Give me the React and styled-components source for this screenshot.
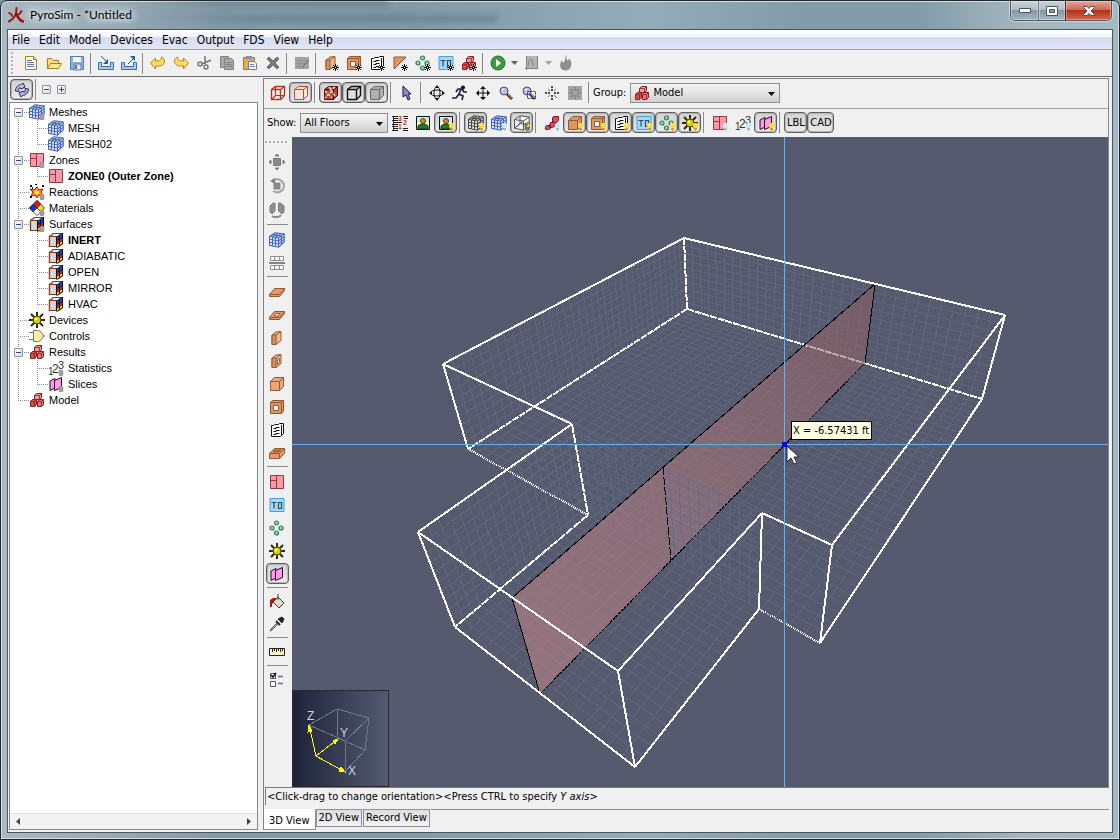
import React from "react";
import styled, { createGlobalStyle, css } from "styled-components";

const GlobalStyle = createGlobalStyle`
  * {
    box-sizing: border-box;
  }
  body {
    margin: 0;
    background: #7f97a3;
  }
  button, select {
    margin: 0;
    font: inherit;
    color: inherit;
  }
`;

/* ---------- icons ---------- */

const Bulb = () => (
  <g>
    <path d="M12 8h3l1 1v3l-1 1h-3l-1-1V9z" fill="#ffd83a" />
    <path d="M12 9h1v2h-1z" fill="#fff6b0" />
    <path d="M12 13h3v2h-1v1h-1v-1h-1z" fill="#e0a010" />
  </g>
);

const PaleBulb = () => (
  <g>
    <path d="M12 8h3l1 1v3l-1 1h-3l-1-1V9z" fill="#cfe6f4" />
    <path d="M12 13h3v2h-1v1h-1v-1h-1z" fill="#9fc0d8" />
  </g>
);

const Spark = () => (
  <g>
    <circle cx="12.5" cy="12.5" r="3" fill="#fff" fillOpacity=".7" />
    <path d="M9 12.500h7M12.500 9v7M10 10l5 5M15 10l-5 5" stroke="#111" strokeWidth="1" fill="none" />
    <path d="M12 12h1v1h-1z" fill="#fff" />
  </g>
);

const Tag = () => <path d="M12 10h2l1 1v4l-1 1h-2l-1-1v-4z" fill="#a2a2a2" stroke="#808080" strokeWidth=".5" />;

const MeshShape = ({ color = "#3f62c0", fill = "#f3f6ff" }) => (
  <g stroke={color} strokeWidth="1.100">
    <path d="M.5 4.500L6 .8l9.200 1.200v8L9.500 15.200.500 13.200z" fill={fill} />
    <path d="M.5 4.500l9 1.500 5.700-4M9.500 6v9M3.500 5v8.700M6.500 5.500v8.800M12.400 4v8.600" fill="none" />
    <path d="M.5 7.300L9.500 9l5.700-4.300M.5 10.200l9 1.800 5.700-4.600M3.500 5L9 1.200M6.500 5.500L12 1.600M3.300 2.600L12.400 4" fill="none" />
  </g>
);

const WireCube = ({ color, fill = "none", width = 1 }) => (
  <g stroke={color} fill={fill} strokeWidth={width}>
    <path d="M1.500 4.500l4-3h9v9l-4 4h-9z" />
    <path d="M1.500 4.500h9v10M10.500 4.500l4-3" fill="none" />
  </g>
);

const Block = () => (
  <g stroke="#96582e" strokeWidth="1">
    <path d="M3 5l4-3 5-.5v9l-5 4H3z" fill="#f0b88e" />
    <path d="M3 5h4v9.500H3z" fill="#d98f5e" />
    <path d="M7 5l5-3.500" fill="none" />
  </g>
);

const HoleFrame = () => (
  <g stroke="#96582e" strokeWidth="1">
    <path d="M1.500 3.500l2-2h11v11l-2 2h-11z" fill="#dc9668" />
    <path d="M1.500 3.500h11v11M12.500 3.500l2-2" fill="none" />
    <path d="M4.500 6.500h5v5h-5z" fill="#fff" />
  </g>
);

const VentPage = () => (
  <g>
    <path d="M2.500 3.500l2-1h4l2-1h4v11l-3 2h-9z" fill="#fff" />
    <path d="M2.500 14.500v-11h2l1-1h4l1-1h4v10l-3 3zM12.500 3v10" fill="none" stroke="#111" />
    <path d="M4.500 6.500h2l1-1h3M4.500 9.500h2l1-1h3M4.500 12.500h2l1-1h3" fill="none" stroke="#111" strokeWidth="1.200" />
  </g>
);

const Diamonds = () => (
  <g fill="#9fd8b4" stroke="#2f7d55" strokeWidth="1.200">
    <circle cx="7.500" cy="3" r="2" />
    <circle cx="3" cy="8" r="2" />
    <circle cx="12" cy="8" r="2" />
    <circle cx="7.500" cy="13" r="2" />
  </g>
);

const Thermo = () => (
  <g>
    <path d="M1 1.500h14v13H1z" fill="#a6d8f0" stroke="#3fa4dc" />
    <path d="M2.500 5.500h5M5 5.500v6M9.500 5.500h3v6h-3z" fill="none" stroke="#2f4a66" strokeWidth="1.200" />
  </g>
);

const RedCubes = () => (
  <g stroke="#8a1f1f" strokeWidth="1">
    <path d="M5.500 3.500l2-2h5v4l-2 2h-5z" fill="#f09a9a" />
    <path d="M1.500 9.500l2-2h4v5l-2 2h-4z" fill="#d84c4c" />
    <path d="M8.500 9.500l2-2h4v5l-2 2h-4z" fill="#e47474" />
    <path d="M1.500 9.500h4v5M8.500 9.500h4v5M5.500 3.500h5v4M5.500 9.500l2-2M12.500 9.500l2-2M10.500 3.500l2-2" fill="none" strokeWidth=".8" />
  </g>
);

const SunGear = () => (
  <g>
    <path d="M8 0v16M0 8h16M2 2l12 12M14 2L2 14" stroke="#2d2d00" strokeWidth="2" fill="none" />
    <circle cx="8" cy="8" r="4" fill="#d2ce00" stroke="#4a4a00" />
    <circle cx="7" cy="7" r="1.500" fill="#ffff7a" />
  </g>
);

const ZoneShape = () => (
  <g fill="#ff98a4" stroke="#8a3c48" strokeWidth="1">
    <path d="M1.500 1.500h13v13h-13z" />
    <path d="M7.500 1.500v13M1.500 6.500h6" />
  </g>
);

const SliceShape = () => (
  <g fill="#ff9ae6" stroke="#2a0a24" strokeWidth="1">
    <path d="M2 5l5-2.500v9.500l-5 2.500z" />
    <path d="M6.500 4.500l7-3v10l-7 3z" />
  </g>
);

const Digits = () => (
  <g fontFamily="Liberation Sans, sans-serif" fill="#333">
    <text x="0" y="15" fontSize="10">1</text>
    <text x="4" y="13" fontSize="12">2</text>
    <text x="10" y="9" fontSize="11">3</text>
  </g>
);

const SurfShape = () => (
  <g>
    <path d="M1.500 4.500l4-3h9v10l-5 3h-8z" fill="#f4f4f4" stroke="#8a3418" strokeWidth="1.200" />
    <path d="M1.500 4.500h7v10h-7z" fill="#d8d8d8" stroke="#8a3418" strokeWidth="1.200" />
    <path d="M8 5l6-4h1v11l-5 3.500H8z" fill="#111" />
    <path d="M9 5l2-1.500v3L9 8zM12 3l2-1v3l-2 1.500z" fill="#1c3fd0" />
    <path d="M9 9l2-1v2l-2 1.500zM12 7l2-1v2.500L12 10z" fill="#e02020" />
    <path d="M9 12.500l2-1.500v2.500L9 15zM12 10.500l2-1v2l-2 1.500z" fill="#ffd800" />
  </g>
);

const Person = () => (
  <g>
    <path d="M1.500 1.500h13v13h-13z" fill="#fff7c0" stroke="#111" />
    <path d="M2 2h12v5H2z" fill="#bdeef4" />
    <path d="M3 14v-3l3-2h4l3 2v3z" fill="#1f7a2c" stroke="#0a3d14" />
    <circle cx="8" cy="6" r="2.500" fill="#d88a2c" stroke="#6b3d0a" />
  </g>
);

const Magnifier = () => (
  <g>
    <path d="M9 9l5 5" stroke="#5a3a20" strokeWidth="3" />
    <path d="M10 9l4 4" stroke="#d89a4c" strokeWidth="1" />
    <circle cx="6" cy="6" r="4" fill="#b9bfe6" stroke="#4a4a66" />
    <path d="M4 5l2-1" stroke="#fff" />
  </g>
);

const Slab = () => (
  <g stroke="#96582e">
    <path d="M.5 10.500l5-6h10v2l-5 6H.5z" fill="#e29a6c" />
    <path d="M.5 10.500h10l5-6" fill="none" />
  </g>
);

const GLYPHS = {
  logo: (
    <g fill="none" stroke="#9b1212" strokeLinecap="round">
      <path d="M8.500 1c0 6-1 10-7.500 13.500" strokeWidth="2" />
      <path d="M8.500 7c1 3 3 6 6.500 7.500" strokeWidth="2.500" />
      <path d="M1 6c2 .5 3 1 3 3M13.500 4c-1 2-2 3-3 3.500" strokeWidth="1.800" />
    </g>
  ),
  file: (
    <g>
      <path d="M2.500 1.500h8l3 3v10h-11z" fill="#fffbe8" stroke="#a8821c" />
      <path d="M10.500 1.500v3h3" fill="#e8d088" stroke="#a8821c" />
      <path d="M4 5.500h5M4 7.500h7M4 9.500h7M4 11.500h7" stroke="#5a78a8" />
    </g>
  ),
  open: (
    <g stroke="#b07a1a">
      <path d="M1.500 13.500v-10h4l2 2h5v3" fill="#f6d98a" />
      <path d="M1.500 13.500l3-5h11l-3 5z" fill="#ffe7a0" />
    </g>
  ),
  save: (
    <g>
      <path d="M1.500 1.500h13v13h-13z" fill="#8fb2d8" stroke="#5a7ba6" />
      <path d="M4 2h8v5H4z" fill="#f2f6fb" />
      <path d="M5 9h7v6H5z" fill="#dfe6ee" stroke="#5a7ba6" />
      <path d="M6 10h2v4H6z" fill="#5a7ba6" />
    </g>
  ),
  importFile: (
    <g>
      <path d="M.5 7.500h3v4h9v-4h3v7H.5z" fill="#a9c6e6" stroke="#3f6fa6" />
      <path d="M3 1l5 5" stroke="#1f4f86" />
      <path d="M10 4v5H5z" fill="#1f5f9a" />
    </g>
  ),
  exportFile: (
    <g>
      <path d="M.5 7.500h3v4h9v-4h3v7H.5z" fill="#a9c6e6" stroke="#3f6fa6" />
      <path d="M7 9l5-5" stroke="#1f4f86" />
      <path d="M14 1v5L9 1z" fill="#1f5f9a" />
    </g>
  ),
  undo: <path d="M.5 8l5-5v3h2c3 0 4-2 4-4 4 1 4 7 0 8.500-1 .5-3 .5-4 .5h-2v3z" fill="#ffdc66" stroke="#b5831a" />,
  redo: <path d="M15.500 8l-5-5v3h-2c-3 0-4-2-4-4-4 1-4 7 0 8.500 1 .5 3 .5 4 .5h2v3z" fill="#ffdc66" stroke="#b5831a" />,
  cut: (
    <g fill="none" stroke="#777" strokeWidth="1.500">
      <path d="M9 1v8M15 5L6 9" />
      <circle cx="4" cy="9" r="2" />
      <circle cx="10" cy="12" r="2" />
    </g>
  ),
  copy: (
    <g fill="#a8a8a8" stroke="#848484">
      <path d="M1.500 1.500h8v11h-8z" />
      <path d="M5.500 3.500h7l2 2v9h-9z" />
      <path d="M7 7.500h6M7 9.500h6M7 11.500h6" />
    </g>
  ),
  paste: (
    <g>
      <path d="M1.500 2.500h11v12h-11z" fill="#e2aa5c" stroke="#a8742c" />
      <path d="M4 1h6v3H4z" fill="#7f93b0" />
      <path d="M6.500 6.500h6l2 2v6h-8z" fill="#f4f7fc" stroke="#6a7fa6" />
      <path d="M8 9.500h4M8 11.500h5" stroke="#6a7fa6" />
    </g>
  ),
  remove: <path d="M2 4l2-2 4 4 4-4 2 2-4 4 4 4-2 2-4-4-4 4-2-2 4-4z" fill="#7b7b7b" stroke="#6a6a6a" />,
  tableEdit: (
    <g>
      <path d="M1 2h14v12H1z" fill="#a4a4a4" />
      <path d="M1 5.500h14M1 8.500h10M1 11.500h8M5.500 5v9" stroke="#929292" />
      <path d="M8 13l6-7" stroke="#868686" strokeWidth="2" />
    </g>
  ),
  newBlock: <g><Block /><Spark /></g>,
  newHole: <g><HoleFrame /><Spark /></g>,
  newVent: <g><VentPage /><Spark /></g>,
  newTri: <g><path d="M2 2h12L2 14z" fill="#dc9668" stroke="#96582e" /><path d="M2 14L14 2" stroke="#7a4422" /><Spark /></g>,
  newDevice: <g><Diamonds /><Spark /></g>,
  newThermo: <g><Thermo /><Spark /></g>,
  newGroup: <g><RedCubes /><Spark /></g>,
  run: (
    <g>
      <circle cx="8" cy="8" r="7" fill="#3f9a3c" stroke="#256b2a" />
      <path d="M6 4l5 4-5 4z" fill="#fff" />
    </g>
  ),
  plot: (
    <g>
      <path d="M2 1h12v12H2z" fill="#b4b4b4" />
      <path d="M2.500 1v14M1 13.500h13" stroke="#808080" />
      <path d="M4 11c2-10 4-9 5 0M13.500 1v13" fill="none" stroke="#808080" />
    </g>
  ),
  flame: <path d="M8 0c1 3 0 4 1 5s2 0 2-2c4 4 3 12-3 12.500C1 15.500 1 9 4 5c0 2 1 3 2 2s1-4 2-7z" fill="#8f8f8f" />,
  sync: (
    <g stroke="#22224a" strokeWidth="1">
      <path d="M1.500 9c0-4 3-6.500 6-6.500L9 1l2 4-4 2-1-1.500C4.500 6 4.500 8 5 9.500z" fill="#c3c3ea" />
      <path d="M14.500 7c0 4-3 6.500-6 6.500L7 15l-2-4 4-2 1 1.500C11.500 10 11.500 8 11 6.500z" fill="#b4b4e2" />
    </g>
  ),
  wireCube: (
    <g>
      <WireCube color="#b0381a" width={1.4} />
      <path d="M1.500 14.500l4-4h9M5.500 10.500v-9" fill="none" stroke="#b0381a" strokeWidth="1.200" />
    </g>
  ),
  lightCube: <WireCube color="#c24a2c" fill="#f6e6e0" />,
  textureCube: (
    <g>
      <WireCube color="#4a1208" fill="#b8442c" />
      <path d="M2 6l7 7M9 6l-7 7M6 2l6 9M12 2l-5 3" stroke="#f4cfc4" strokeWidth="1.500" strokeDasharray="3 1" />
    </g>
  ),
  outlineCube: <WireCube color="#111" fill="#dedede" width={1.4} />,
  greyCube: <WireCube color="#666" fill="#b0b0b0" />,
  cursor: <path d="M4 1v11l3-2 2 5 2-1-2-5h3z" fill="#8c8cd0" stroke="#14143c" />,
  orbit: (
    <g fill="none" stroke="#111">
      <ellipse cx="8" cy="8" rx="6.500" ry="3" />
      <ellipse cx="8" cy="8" rx="3" ry="6.500" />
      <path d="M8 0l2 3H6zM8 16l2-3H6zM0 8l3-2v4zM16 8l-3-2v4z" fill="#111" stroke="none" />
    </g>
  ),
  walk: (
    <g>
      <circle cx="11" cy="2.500" r="2" fill="#111" />
      <path d="M9 4L7 9l4 2-1 4M7 9l-3 4H0M4 7l2-3h4l2 3h3" fill="none" stroke="#22223a" strokeWidth="1.700" />
    </g>
  ),
  pan: (
    <g>
      <path d="M8 2v12M2 8h12" stroke="#111" strokeWidth="1" />
      <path d="M8 1l3 3H5zM8 15l3-3H5zM1 8l3-3v6zM15 8l-3-3v6z" fill="#111" />
    </g>
  ),
  zoom: <Magnifier />,
  zoomBox: <g><Magnifier /><path d="M6.500 6.500h8v7h-8z" fill="none" stroke="#26268a" strokeDasharray="2 1" /></g>,
  center: (
    <g stroke="#111" fill="none">
      <path d="M8 1v5M8 10v5M1 8h5M10 8h5" strokeWidth="1.500" strokeDasharray="2 1" />
      <path d="M4 4l2 2M12 4l-2 2M4 12l2-2" stroke="#4a7aa8" />
      <path d="M10 10l3 3" stroke="#b0541a" />
    </g>
  ),
  resetView: (
    <g>
      <path d="M1 1h14v14H1z" fill="#a4a4a4" />
      <path d="M8 2v4M8 10v4M2 8h4M10 8h4M4 4l2 2M12 4l-2 2M4 12l2-2M12 12l-2-2" stroke="#7c7c7c" strokeWidth="1.200" />
    </g>
  ),
  floors: (
    <g>
      <path d="M0 1.500h6M11 1.500h5M1 3.500h5M0 5.500h6M1 7.500h9M0 9.500h6M0 11.500h6M1 13.500h5M0 15.500h6M11 13.500h5M11 15.500h5M12 3.500h4" stroke="#222" />
      <path d="M1.500 1v14" stroke="#222" />
      <g fontFamily="Liberation Sans, sans-serif" fontSize="7" fontWeight="bold" fill="#d42a1a">
        <text x="6" y="6">3</text>
        <text x="11" y="10">2</text>
        <text x="6" y="14">1</text>
      </g>
    </g>
  ),
  person: <Person />,
  personOn: <g><Person /><Bulb /></g>,
  meshGreyOn: <g><MeshShape color="#444" fill="#f4f4f4" /><Bulb /></g>,
  meshPale: <g><MeshShape /><PaleBulb /></g>,
  meshLineOn: (
    <g stroke="#555" fill="none">
      <path d="M.5 4.500L6 .8l9.200 1.200v8L9.500 15.200.500 13.200z" fill="#f4f4f4" />
      <path d="M.5 4.500l9 1.500 5.700-4M9.500 6v9M.5 13.200L6 8.500l9.200 1.500M6 8.500V1M9.500 6L.5 13.200" />
      <Bulb />
    </g>
  ),
  groupPale: <g><path d="M9.500 1.500h5v4l-2 2h-4v-5zM6.500 7.500h5v3l-3 2h-3v-3zM2.500 10.500h4v3l-2 1h-3v-3z" fill="#d84c5c" stroke="#7d1622" /><PaleBulb /></g>,
  boxOn: <g><path d="M1.500 5.500l4-4h9v9l-4 4h-9z" fill="#dc9668" stroke="#96582e" /><path d="M1.500 5.500h9v9M10.500 5.500l4-4" fill="none" stroke="#96582e" /><Bulb /></g>,
  holeOn: <g><HoleFrame /><Bulb /></g>,
  ventOn: <g><VentPage /><Bulb /></g>,
  thermoOn: <g><Thermo /><Bulb /></g>,
  devicesOn: <g><Diamonds /><Bulb /></g>,
  sunOn: <g><SunGear /><Bulb /></g>,
  zonePale: <g><ZoneShape /><PaleBulb /></g>,
  digitsPale: <g><Digits /><PaleBulb /></g>,
  sliceOn: <g><SliceShape /><Bulb /></g>,
  move: <path d="M4.500 4.500h7v7h-7zM8 0l2 2H6zM8 16l2-2H6zM0 8l2-2v4zM16 8l-2-2v4z" fill="#8a8a8a" stroke="#7a7a7a" />,
  rotate: (
    <g>
      <path d="M4.500 4.500h7v7h-7z" fill="#8a8a8a" />
      <path d="M4 2c6-2 11 1 11 6s-6 8-11 5" fill="none" stroke="#a4a4a4" strokeWidth="2" />
      <path d="M1 3l5-3v6z" fill="#808080" />
    </g>
  ),
  mirror: (
    <g>
      <path d="M1 4l3-3h2v8l-3 3-2-2zM9.500 1h2L15 4v6l-2 2-3.500-3z" fill="#8f8f8f" stroke="#7c7c7c" />
      <path d="M3 14c3 2 8 1 9-1" fill="none" stroke="#8a8a8a" strokeWidth="2" />
    </g>
  ),
  mesh: <MeshShape />,
  meshSplit: (
    <g fill="#fafafa" stroke="#8f8f8f">
      <path d="M1.500 1.500h13v4h-13zM5.500 1.500v4M10.500 1.500v4M1.500 10.500h13v4h-13zM5.500 10.500v4M10.500 10.500v4" />
      <path d="M0 8h16" stroke="#848484" strokeWidth="2" />
    </g>
  ),
  slab: <Slab />,
  slabHole: <g><Slab /><path d="M5 9l2-2.500h4L9 9z" fill="#fff" stroke="#96582e" /></g>,
  wall: <Block />,
  wallHole: <g><Block /><path d="M8.500 6.500l2-1v4l-2 2z" fill="#fff" stroke="#96582e" /></g>,
  box: <g><path d="M1.500 5.500l4-4h9v9l-4 4h-9z" fill="#e8a87c" stroke="#96582e" /><path d="M1.500 5.500h9v9M10.500 5.500l4-4" fill="none" stroke="#96582e" /></g>,
  hole: <HoleFrame />,
  vent: <VentPage />,
  room: (
    <g stroke="#96582e">
      <path d="M.5 8.500l5-5h10v5l-5 5H.5z" fill="#e29a6c" />
      <path d="M.5 8.500h10v5M10.500 8.500l5-5" fill="none" />
      <path d="M4 7l2-2h6l-2 2z" fill="#c47a4a" />
    </g>
  ),
  zone: <ZoneShape />,
  zoneTag: <g><ZoneShape /><Tag /></g>,
  thermo: <Thermo />,
  devices: <Diamonds />,
  sun: <SunGear />,
  slice: <SliceShape />,
  sliceTag: <g><SliceShape /><Tag /></g>,
  paint: (
    <g>
      <path d="M4 8l5-5 6 6-5 5z" fill="#dedecc" stroke="#3d3d30" />
      <path d="M9 0v6" stroke="#3d3d30" />
      <path d="M1 13V6l3-2h4L4 8v2L3 9v4z" fill="#a81818" />
    </g>
  ),
  dropper: (
    <g>
      <path d="M9 3l4-2 2 2-2 4z" fill="#22222e" stroke="#22222e" />
      <path d="M7 5l4 4" stroke="#22222e" strokeWidth="2" />
      <path d="M8 7l-6 6-1 2 2-1 6-6z" fill="#e0a0a0" stroke="#555" />
    </g>
  ),
  ruler: <path d="M.5 4.500h15v7H.5zM3.500 5v3M5.500 5v2M7.500 5v3M9.500 5v2M11.500 5v3M13.500 5v2" fill="#fff6c4" stroke="#222" />,
  checks: (
    <g>
      <path d="M1.500 1.500h5v5h-5zM1.500 9.500h5v5h-5z" fill="#fff" stroke="#555" />
      <path d="M2 3l2 2 3-4" fill="none" stroke="#111" strokeWidth="1.500" />
      <path d="M9 4.500h5M9 11.500h5" stroke="#6a6a9a" strokeWidth="1.500" />
    </g>
  ),
  meshTag: <g><MeshShape /><Tag /></g>,
  reaction: (
    <g>
      <path d="M8 3l2 3 4-1-2 3 2 4-4-1-2 3-2-3-4 1 2-4-3-3 4 1z" fill="#ff9a1a" stroke="#b01010" />
      <path d="M1 1h2v2H1zM3 3h1v2H3zM13 1h2v2h-2zM1 12h2v2H1zM6 0h2v1H6z" fill="#111" />
      <path d="M6 7h4v3H6z" fill="#ffe94a" />
      <Tag />
    </g>
  ),
  material: (
    <g>
      <path d="M8 0l4 4-4 4-4-4z" fill="#e01818" />
      <path d="M4 4l4 4-4 4-4-4z" fill="#1830c8" />
      <path d="M12 4l4 4-4 4-4-4z" fill="#ffe020" />
      <path d="M8 8l4 4-4 4-4-4z" fill="#fff" />
      <path d="M8 .5L15.500 8 8 15.500.500 8zM4 4l8 8M12 4l-8 8" fill="none" stroke="#222" strokeWidth=".8" />
      <Tag />
    </g>
  ),
  surfTag: <g><SurfShape /><Tag /></g>,
  surf: <SurfShape />,
  control: (
    <g>
      <path d="M4.500 2.500h4c3 0 5 3 6 5.500-1 2.500-3 5.500-6 5.500h-4z" fill="#fff0a0" stroke="#77735a" />
      <path d="M0 4.500h4M0 11.500h4M14 8h2" stroke="#777" />
    </g>
  ),
  group: <RedCubes />,
  digitsTag: <g><Digits /><Tag /></g>,
};

const IconSvg = styled.svg`
  display: block;
  flex: none;
  width: 16px;
  height: 16px;
`;

const Icon = ({ name }) => (
  <IconSvg viewBox="0 0 16 16" aria-hidden="true">
    {GLYPHS[name]}
  </IconSvg>
);

/* ---------- window frame ---------- */

const Window = styled.div`
  display: flex;
  flex-direction: column;
  height: 100vh;
  padding: 0 7px 7px;
  overflow: hidden;
  font: 11px/14px "DejaVu Sans Condensed", "Noto Sans", sans-serif;
  color: #000;
  background: linear-gradient(90deg, #a9b9c2 0, #8299a6 20%, #8199a6 35%, #94abb8 58%, #819ca9 72%, #819ca9 82%, #a8b8c1 92%, #a3b9c4 100%);
  border: 1px solid #22272b;
  border-radius: 7px 7px 0 0;
  box-shadow: inset 0 0 0 1px #d5e0e6;
`;

const TitleBar = styled.header`
  position: relative;
  display: flex;
  flex: none;
  justify-content: space-between;
  align-items: flex-start;
  height: 28px;
`;

const Title = styled.h1`
  display: flex;
  align-items: center;
  gap: 6px;
  height: 27px;
  margin: 0;
  font: 12px/16px Lato, "Noto Sans", sans-serif;
  text-shadow: 0 0 6px #fff, 0 0 10px #fff, 0 0 12px #e4eef2;
`;

const GlassShade = styled.div`
  position: absolute;
  left: 140px;
  top: ${(p) => p.$top}px;
  width: ${(p) => p.$width}px;
  height: 7px;
  background: linear-gradient(90deg, transparent, #5c747f 30%, #536a75);
  filter: blur(3px);
  opacity: 0.5;
`;

const Controls = styled.div`
  display: flex;
  height: 20px;
  overflow: hidden;
  border: 1px solid #4c5a62;
  border-top: 0;
  border-radius: 0 0 5px 5px;
  box-shadow: 0 0 0 1px #c9d6dd;
`;

const ControlButton = styled.button`
  display: grid;
  place-items: center;
  width: ${(p) => (p.$close ? 46 : 27)}px;
  padding: 0;
  border: 0;
  border-left: 1px solid ${(p) => (p.$close ? "#5c1810" : "#6b7a83")};
  background: ${(p) =>
    p.$close
      ? "linear-gradient(#e2a89a 0, #cf6b57 45%, #b5301a 50%, #d2674a 100%)"
      : "linear-gradient(#c9d4da 0, #aebdc5 45%, #8397a2 50%, #a3b5c0 100%)"};
  box-shadow: inset 0 0 0 1px rgba(255, 255, 255, 0.35);
  &:first-child {
    border-left: 0;
  }
`;

const Client = styled.main`
  display: flex;
  flex: 1;
  flex-direction: column;
  min-height: 0;
  background: #f0f0f0;
  border: 1px solid #4c5559;
  margin: 0 -1px -1px;
`;

const MenuBar = styled.nav`
  display: flex;
  flex: none;
  gap: 9px;
  height: 20px;
  padding-left: 4px;
  font-size: 12px;
  background: linear-gradient(#fff 0, #f1f4fa 35%, #d5dcee 40%, #e1e6f6 100%);
  border-bottom: 1px solid #a0a0a0;
`;

const MenuItem = styled.button`
  padding: 1px 0 0;
  border: 0;
  background: none;
`;

/* ---------- toolbars ---------- */

const Toolbar = styled.div`
  display: flex;
  flex: none;
  align-items: center;
  height: ${(p) => p.$height}px;
  padding: 0 0 ${(p) => p.$foot || 0}px ${(p) => p.$indent || 0}px;
  border-bottom: 1px solid ${(p) => p.$line || "transparent"};
`;

const Grip = styled.div`
  flex: none;
  width: 2px;
  height: 22px;
  margin-right: 6px;
  background: repeating-linear-gradient(#b5b5b5 0 2px, transparent 2px 4px);
  ${(p) =>
    p.$flat &&
    css`
      width: 24px;
      height: 2px;
      margin: 4px 0 7px;
      background: repeating-linear-gradient(90deg, #b5b5b5 0 2px, transparent 2px 4px);
    `}
`;

const pressed = css`
  border-color: #5e5e5e;
  background: linear-gradient(#d2d2d2, #ececec);
  box-shadow: inset 0 0 1px 1px #b4b4b4;
`;

const Tool = styled.button`
  display: grid;
  flex: none;
  place-items: center;
  width: ${(p) => p.$width || 23}px;
  height: 21px;
  padding: 0;
  border: 1px solid transparent;
  border-radius: 4px;
  background: none;
  ${(p) => p["aria-pressed"] && pressed}
`;

const Divider = styled.div`
  flex: none;
  width: 1px;
  height: 21px;
  margin: 0 ${(p) => p.$space || 3}px 0 2px;
  background: #8a8a8a;
`;

const FlatDivider = styled.div`
  flex: none;
  width: 21px;
  height: 1px;
  margin: 2px 0 3px;
  background: #8a8a8a;
`;

const Arrow = styled.button`
  display: grid;
  place-items: center;
  width: 11px;
  height: 21px;
  padding: 0;
  border: 0;
  background: none;
  color: ${(p) => (p.$dim ? "#a4a4a4" : "#666")};
`;

const ArrowDown = () => (
  <svg width="7" height="4" viewBox="0 0 7 4" aria-hidden="true">
    <path d="M0 0h7L3.500 4z" fill="currentColor" />
  </svg>
);

const SelectBox = styled.span`
  position: relative;
  flex: none;
  width: ${(p) => p.$width}px;
  select {
    width: 100%;
    height: 20px;
    padding: 0 16px 0 ${(p) => (p.$icon ? 22 : 3)}px;
    appearance: none;
    border: 1px solid #8e8f8f;
    border-radius: 0;
    background: linear-gradient(#f4f4f4, #e4e4e4 50%, #cfcfcf);
    outline: none;
  }
  svg {
    position: absolute;
    pointer-events: none;
  }
  > svg:first-child {
    left: 4px;
    top: 2px;
  }
  > svg:last-child {
    right: 5px;
    top: 9px;
  }
`;

const Label = styled.label`
  margin-right: 4px;
`;

const SideTools = styled.div`
  display: flex;
  flex: none;
  flex-direction: column;
  align-items: center;
  width: 28px;
  padding-right: 2px;
`;

const SideSlot = styled.div`
  display: grid;
  place-items: center;
  height: ${(p) => p.$height}px;
`;

/* ---------- tree ---------- */

const Body = styled.div`
  display: flex;
  flex: 1;
  gap: 5px;
  min-height: 0;
  padding: 1px 3px 2px 1px;
`;

const Sidebar = styled.aside`
  display: flex;
  flex: none;
  flex-direction: column;
  width: 249px;
`;

const TreeFrame = styled.div`
  display: flex;
  flex: 1;
  flex-direction: column;
  min-height: 0;
  border: 1px solid #828790;
  background: #fff;
`;

const Tree = styled.ul`
  flex: 1;
  margin: 0;
  padding: 1px 0 0;
  overflow: hidden;
  list-style: none;
  font: 11px/16px "Liberation Sans", Arial, sans-serif;
`;

const TreeRow = styled.li`
  display: flex;
  align-items: center;
  height: 16px;
  white-space: nowrap;
  font-weight: ${(p) => (p.$bold ? "bold" : "normal")};
  > svg {
    margin-right: 4px;
  }
`;

const dotsDown = "repeating-linear-gradient(#8c8c8c 0 1px, transparent 1px 2px)";
const dotsAcross = "repeating-linear-gradient(90deg, #8c8c8c 0 1px, transparent 1px 2px)";

const Rail = styled.span`
  display: grid;
  place-items: center;
  flex: none;
  width: 19px;
  height: 16px;
  background-repeat: no-repeat;
  background-image: ${dotsDown}, ${dotsAcross};
  background-position: 8px ${(p) => (p.$kind === "first" ? 8 : 0)}px, 8px 8px;
  background-size: 1px ${(p) => (p.$kind === "last" ? 8 : 16)}px, ${(p) => (p.$kind === "pass" ? 0 : 11)}px 1px;
`;

const Expander = styled.button`
  display: grid;
  place-items: center;
  width: 9px;
  height: 9px;
  padding: 0;
  margin-right: ${(p) => p.$gap || 2}px;
  border: 1px solid #919191;
  border-radius: 1px;
  background: linear-gradient(135deg, #fff, #dcdcdc);
`;

const Sign = ({ plus }) => (
  <svg width="5" height="5" viewBox="0 0 5 5" aria-hidden="true">
    <path d={plus ? "M0 2h5v1H0zM2 0h1v5H2z" : "M0 2h5v1H0z"} fill="#2c4a94" />
  </svg>
);

const ScrollTrack = styled.div`
  display: flex;
  flex: none;
  justify-content: space-between;
  align-items: center;
  height: 16px;
  padding: 0 6px;
  background: #f3f3f3;
  border-top: 1px solid #e4e4e4;
`;

/* ---------- right pane ---------- */

const Pane = styled.section`
  display: flex;
  flex: 1;
  flex-direction: column;
  min-width: 0;
  border-left: 1px solid #828282;
`;

const PaneTop = styled.div`
  display: flex;
  flex: 1;
  flex-direction: column;
  min-height: 0;
  border: 1px solid #828790;
  border-left: 0;
  border-bottom: 0;
`;

const Stage = styled.div`
  display: flex;
  flex: 1;
  min-height: 0;
`;

const Viewport = styled.svg`
  display: block;
  flex: 1;
  min-width: 0;
  height: 100%;
  background: #555a6e;
`;

const Status = styled.p`
  flex: none;
  height: 18px;
  margin: 0 0 4px 1px;
  padding-left: 1px;
  line-height: 17px;
  border: solid #7b7b7b;
  border-width: 1px 0 0 1px;
`;

const Tabs = styled.div`
  display: flex;
  flex: none;
  align-items: flex-start;
  height: 21px;
`;

const Tab = styled.button`
  height: ${(p) => (p["aria-selected"] ? 21 : 18)}px;
  padding: ${(p) => (p["aria-selected"] ? "2px 5px 0 5px" : "0 2px")};
  border: 1px solid #8e8f99;
  border-left-width: ${(p) => (p["aria-selected"] ? 0 : 1)}px;
  border-top-color: ${(p) => (p["aria-selected"] ? "#fff" : "#8e8f99")};
  background: ${(p) => (p["aria-selected"] ? "#fff" : "linear-gradient(#dedede, #f2f2f2)")};
  & + & {
    margin-right: 1px;
  }
`;

const TabRule = styled.span`
  flex: 1;
  border-top: 1px solid #8e8f99;
`;

/* ---------- 3D scene ---------- */

// corners of the two meshes: lower case is the floor, upper case the top
const P = {
  A: [684, 238], B: [1005, 315], C: [832, 545], D: [443, 364],
  a: [687, 309], b: [982, 399], c: [820, 643], d: [468, 449],
  E: [762, 513], F: [572, 424], G: [418, 532], H: [618, 671],
  e: [759, 609], f: [588, 515], g: [455, 627], h: [635, 767],
};

function projector(quad) {
  const [[x0, y0], [x1, y1], [x2, y2], [x3, y3]] = quad;
  const dx1 = x1 - x2, dx2 = x3 - x2, dx3 = x0 - x1 + x2 - x3;
  const dy1 = y1 - y2, dy2 = y3 - y2, dy3 = y0 - y1 + y2 - y3;
  const den = dx1 * dy2 - dx2 * dy1;
  const g = (dx3 * dy2 - dx2 * dy3) / den;
  const h = (dx1 * dy3 - dx3 * dy1) / den;
  return (u, v) => {
    const w = g * u + h * v + 1;
    const x = ((x1 - x0 + g * x1) * u + (x3 - x0 + h * x3) * v + x0) / w;
    const y = ((y1 - y0 + g * y1) * u + (y3 - y0 + h * y3) * v + y0) / w;
    return `${x.toFixed(1)} ${y.toFixed(1)}`;
  };
}

function gridPath(names, cols, rows) {
  const at = projector(names.split("").map((n) => P[n]));
  let d = "";
  for (let i = 0; i <= cols; i++) d += `M${at(i / cols, 0)}L${at(i / cols, 1)}`;
  for (let j = 0; j <= rows; j++) d += `M${at(0, j / rows)}L${at(1, j / rows)}`;
  return d;
}

const edges = (list) => list.split(" ").map((pair) => `M${P[pair[0]]}L${P[pair[1]]}`).join("");

const GRIDS = [
  ["DAad", 36, 10],
  ["ABba", 32, 10],
  ["abcd", 32, 36],
  ["FGgf", 18, 10],
  ["fehg", 16, 18],
];

const Scene = () => (
  <Viewport viewBox="292 137 816 650" preserveAspectRatio="xMinYMin slice" role="img" aria-label="3D model view">
    <defs>
      <linearGradient id="slice" gradientUnits="userSpaceOnUse" x1="520" y1="620" x2="870" y2="320">
        <stop offset="0" stopColor="#c4888b" />
        <stop offset=".5" stopColor="#ae787a" />
        <stop offset="1" stopColor="#8f6063" />
      </linearGradient>
      <linearGradient id="axes">
        <stop offset="0" stopColor="#1d2338" />
        <stop offset="1" stopColor="#545a6f" />
      </linearGradient>
      <clipPath id="innerWall">
        <path d="M663 467L733 498 671 561z" />
      </clipPath>
    </defs>

    <g shapeRendering="crispEdges" fill="none">
      <g stroke="#60657c">
        {GRIDS.map(([quad, cols, rows]) => (
          <path key={quad} d={gridPath(quad, cols, rows)} />
        ))}
        <path d={gridPath("FEef", 20, 10)} stroke="#5d647d" />
      </g>
      <g stroke="#fff" strokeWidth="2">
        <path d={edges("Aa ab ad")} strokeDasharray="7 1" />
      </g>
      <path d="M512 598L875 284 865 363 540 694z" fill="url(#slice)" fillOpacity=".55" />
      <path d={gridPath("FEef", 20, 10)} stroke="#5f6f92" clipPath="url(#innerWall)" />
      <path d="M540 694L512 598 875 284 865 363" stroke="#000" />
      <path d="M663 467L671 561" stroke="#000" strokeDasharray="8 2" />
      <path d="M540 694L865 363" stroke="#000" strokeDasharray="3 1" />
      <g stroke="#fff" strokeWidth="2">
        <path d={edges("DA AB BC CE DF Dd Bb bc Cc EH HG GF Gg gh Hh he Ee")} />
        <path d={edges("Ff fg")} strokeDasharray="9 1" />
        <path d={edges("df ce")} strokeDasharray="1 1" />
      </g>
      <path d="M292 444.500H3000M784.500 137V3000" stroke="#5fb2f8" />
      <path d="M782 442h5v5h-5z" fill="#0000f0" />
    </g>

    <path d="M787 446v16l4-4 3 6 3-1-3-6h5z" fill="#fff" stroke="#23233a" />

    <rect x="791.5" y="421.5" width="80" height="18" fill="#ffffe1" stroke="#000" />
    <text x="793" y="434" fontSize="11">X = -6.57431 ft</text>

    <rect x="292.500" y="690.500" width="96" height="96" fill="url(#axes)" stroke="#2b2924" />
    <g fill="none" shapeRendering="crispEdges">
      <path d="M309 725L337 709 369 718 345 741zM337 709L338 738 365 750 369 718M345 741V772L365 750" stroke="#70768e" />
      <path d="M309 725L316 756 345 772M316 756L338 739" stroke="#ff0" />
      <path d="M309 725l-1 7 4-1zM345 772l-6-1 2-4zM338 739l-5 2 2 3z" fill="#ff0" stroke="#ff0" />
    </g>
    <g fill="#d0d2da" fontFamily="Liberation Sans, sans-serif" fontSize="12">
      <text x="307" y="720">Z</text>
      <text x="340" y="737">Y</text>
      <text x="348" y="775">X</text>
    </g>
  </Viewport>
);

/* ---------- data ---------- */

const MENUS = ["File", "Edit", "Model", "Devices", "Evac", "Output", "FDS", "View", "Help"];

const MAIN_TOOLS = [
  "file open save | importFile exportFile | undo redo cut copy paste remove | tableEdit |",
  "newBlock newHole newVent newTri newDevice newThermo newGroup | run",
].join(" ");
const VIEW_TOOLS =
  "wireCube lightCube* | textureCube* outlineCube* greyCube* | cursor | orbit walk pan zoom zoomBox center resetView |";
const SHOW_TOOLS =
  "floors person personOn* | meshGreyOn* meshPale meshLineOn* | groupPale boxOn* holeOn* ventOn* thermoOn* devicesOn* sunOn* | zonePale digitsPale sliceOn* |";

const SIDE_GROUPS = [
  [24, "move rotate mirror"],
  [23, "mesh meshSplit"],
  [23, "slab slabHole wall wallHole box hole vent room"],
  [23, "zone thermo devices sun slice*"],
  [22, "paint dropper"],
  [22, "ruler"],
  [22, "checks"],
];

const TREE = [
  { label: "Meshes", icon: "meshTag", children: [{ label: "MESH", icon: "mesh" }, { label: "MESH02", icon: "mesh" }] },
  { label: "Zones", icon: "zoneTag", children: [{ label: "ZONE0 (Outer Zone)", icon: "zone", bold: true }] },
  { label: "Reactions", icon: "reaction" },
  { label: "Materials", icon: "material" },
  {
    label: "Surfaces",
    icon: "surfTag",
    children: [
      { label: "INERT", icon: "surf", bold: true },
      { label: "ADIABATIC", icon: "surf" },
      { label: "OPEN", icon: "surf" },
      { label: "MIRROR", icon: "surf" },
      { label: "HVAC", icon: "surf" },
    ],
  },
  { label: "Devices", icon: "sun" },
  { label: "Controls", icon: "control" },
  { label: "Results", icon: "group", children: [{ label: "Statistics", icon: "digitsTag" }, { label: "Slices", icon: "sliceTag" }] },
  { label: "Model", icon: "group" },
];

const ToolButton = ({ item }) => {
  const on = item.endsWith("*");
  const name = item.replace("*", "");
  return (
    <Tool type="button" aria-label={name} aria-pressed={on}>
      <Icon name={name} />
    </Tool>
  );
};

const ToolList = ({ items, space }) =>
  items.split(" ").map((item, i) => (item === "|" ? <Divider key={i} $space={space} /> : <ToolButton key={i} item={item} />));

const TreeView = () => (
  <Tree>
    {TREE.map((node, i) => {
      const kind = i === 0 ? "first" : i === TREE.length - 1 ? "last" : "mid";
      const kids = node.children || [];
      return (
        <React.Fragment key={node.label}>
          <TreeRow>
            <Rail $kind={kind}>
              {kids.length > 0 && (
                <Expander type="button" aria-label={`Collapse ${node.label}`}>
                  <Sign />
                </Expander>
              )}
            </Rail>
            <Icon name={node.icon} />
            {node.label}
          </TreeRow>
          {kids.map((kid, k) => (
            <TreeRow key={kid.label} $bold={kid.bold}>
              <Rail $kind="pass" />
              <Rail $kind={k === kids.length - 1 ? "last" : "mid"} />
              <Icon name={kid.icon} />
              {kid.label}
            </TreeRow>
          ))}
        </React.Fragment>
      );
    })}
  </Tree>
);

export default function App() {
  return (
    <Window>
      <GlobalStyle />
      <TitleBar>
        <GlassShade $top={14} $width={350} />
        <GlassShade $top={-2} $width={240} />
        <Title>
          <Icon name="logo" />
          PyroSim - *Untitled
        </Title>
        <Controls>
          <ControlButton type="button" aria-label="Minimize">
            <svg width="12" height="5"><path d="M.5.5h11v4H.5z" fill="#fff" stroke="#4a5560" /></svg>
          </ControlButton>
          <ControlButton type="button" aria-label="Maximize">
            <svg width="12" height="10"><path d="M.5.5h11v9H.5zM3.500 3.500h5v3h-5z" fill="#fff" stroke="#4a5560" fillRule="evenodd" /></svg>
          </ControlButton>
          <ControlButton type="button" aria-label="Close" $close>
            <svg width="12" height="10"><path d="M.5.5h3.500l2 2 2-2h3.500v1L8 5l3.500 3.500v1H8l-2-2-2 2H.5v-1L4 5 .5 1.500z" fill="#fff" stroke="#54484c" /></svg>
          </ControlButton>
        </Controls>
      </TitleBar>

      <Client>
        <MenuBar>
          {MENUS.map((m) => (
            <MenuItem key={m} type="button">{m}</MenuItem>
          ))}
        </MenuBar>
        <Toolbar $height={27} $indent={3} $line="#6a6a6a">
          <Grip />
          <ToolList items={MAIN_TOOLS} />
          <Arrow type="button" aria-label="Run options"><ArrowDown /></Arrow>
          <ToolButton item="plot" />
          <Arrow type="button" aria-label="Plot options" $dim><ArrowDown /></Arrow>
          <ToolButton item="flame" />
        </Toolbar>

        <Body>
          <Sidebar>
            <Toolbar $height={24} $indent={1}>
              <ToolButton item="sync*" />
              <Divider $space={6} />
              <Expander type="button" aria-label="Collapse all" $gap={6}><Sign /></Expander>
              <Expander type="button" aria-label="Expand all"><Sign plus /></Expander>
            </Toolbar>
            <TreeFrame>
              <TreeView />
              <ScrollTrack>
                <svg width="4" height="7"><path d="M4 0v7L0 3.500z" fill="#444" /></svg>
                <svg width="4" height="7"><path d="M0 0v7l4-3.500z" fill="#444" /></svg>
              </ScrollTrack>
            </TreeFrame>
          </Sidebar>

          <Pane>
            <PaneTop>
              <Toolbar $height={30} $indent={2} $foot={2} $line="#a0a0a0">
                <ToolList items={VIEW_TOOLS} space={4} />
                <Label htmlFor="group">Group:</Label>
                <SelectBox $width={150} $icon>
                  <Icon name="group" />
                  <select id="group" defaultValue="Model">
                    <option>Model</option>
                  </select>
                  <ArrowDown />
                </SelectBox>
              </Toolbar>
              <Toolbar $height={28} $indent={3}>
                <Label htmlFor="floors">Show:</Label>
                <SelectBox $width={88}>
                  <select id="floors" defaultValue="All Floors">
                    <option>All Floors</option>
                  </select>
                  <ArrowDown />
                </SelectBox>
                <ToolList items={SHOW_TOOLS} space={4} />
                <Tool type="button" aria-pressed>LBL</Tool>
                <Tool type="button" aria-pressed $width={27}>CAD</Tool>
              </Toolbar>
              <Stage>
                <SideTools>
                  <Grip $flat />
                  {SIDE_GROUPS.map(([height, items], g) => (
                    <React.Fragment key={items}>
                      {g > 0 && <FlatDivider />}
                      {items.split(" ").map((item) => (
                        <SideSlot key={item} $height={height}>
                          <ToolButton item={item} />
                        </SideSlot>
                      ))}
                    </React.Fragment>
                  ))}
                </SideTools>
                <Scene />
              </Stage>
            </PaneTop>
            <Status>
              &lt;Click-drag to change orientation&gt;&lt;Press CTRL to specify <em>Y axis</em>&gt;
            </Status>
            <Tabs role="tablist">
              <Tab type="button" role="tab" aria-selected>3D View</Tab>
              <Tab type="button" role="tab">2D View</Tab>
              <Tab type="button" role="tab">Record View</Tab>
              <TabRule />
            </Tabs>
          </Pane>
        </Body>
      </Client>
    </Window>
  );
}
